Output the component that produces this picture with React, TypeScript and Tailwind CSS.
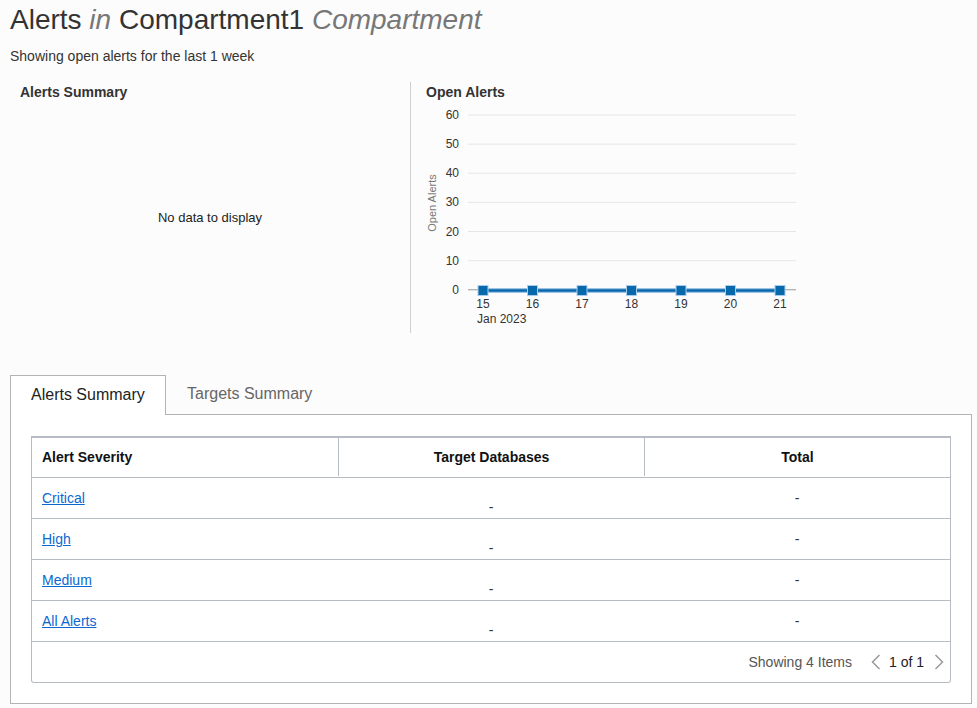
import React from 'react';

// Kartu ringkasan alert untuk satu compartment

const yTicks = [60, 50, 40, 30, 20, 10, 0];
const days = ['15', '16', '17', '18', '19', '20', '21'];
const rows = ['Critical', 'High', 'Medium', 'All Alerts'];

function OpenAlertsChart() {
  const gy = (i: number) => 13 + i * 29.13;
  const px = (i: number) => 57 + i * 49.5;
  const lineY = 188.5;
  return (
    <svg width="380" height="231" viewBox="0 0 380 231" className="block">
      <text
        x="6"
        y="101"
        transform="rotate(-90 6 101)"
        textAnchor="middle"
        dominantBaseline="central"
        fontSize="11"
        fill="#777"
        fontFamily="'Liberation Sans', Arial, sans-serif"
      >
        Open Alerts
      </text>
      {yTicks.map((t, i) => (
        <g key={t}>
          <line
            x1="42"
            x2="370"
            y1={gy(i)}
            y2={gy(i)}
            stroke={t === 0 ? '#9a9a9a' : '#e4e6ea'}
            strokeWidth="1"
          />
          <text
            x="33"
            y={gy(i)}
            textAnchor="end"
            dominantBaseline="central"
            fontSize="12"
            fill="#333"
            fontFamily="'Liberation Sans', Arial, sans-serif"
          >
            {t}
          </text>
        </g>
      ))}
      <line x1={px(0)} x2={px(6)} y1={lineY} y2={lineY} stroke="#9cc4e6" strokeWidth="5" />
      <line x1={px(0)} x2={px(6)} y1={lineY} y2={lineY} stroke="#0a67ab" strokeWidth="2.5" />
      {days.map((d, i) => (
        <g key={d}>
          <rect
            x={px(i) - 5}
            y={lineY - 5}
            width="10"
            height="10"
            fill="#0768ac"
            stroke="#a9cdea"
            strokeWidth="1"
          />
          <text
            x={px(i)}
            y="206"
            textAnchor="middle"
            fontSize="12"
            fill="#333"
            fontFamily="'Liberation Sans', Arial, sans-serif"
          >
            {d}
          </text>
        </g>
      ))}
      <text x="51" y="221" fontSize="12" fill="#333" fontFamily="'Liberation Sans', Arial, sans-serif">
        Jan 2023
      </text>
    </svg>
  );
}

function Chevron({ dir }: { dir: 'left' | 'right' }) {
  return (
    <svg width="10" height="16" viewBox="0 0 10 16" fill="none" stroke="#9a9a9a" strokeWidth="1.5">
      {dir === 'left' ? <polyline points="8.5 1 1.5 8 8.5 15" /> : <polyline points="1.5 1 8.5 8 1.5 15" />}
    </svg>
  );
}

export default function App() {
  return (
    <div
      className="min-h-screen bg-[#fcfcfc] text-[#333]"
      style={{ fontFamily: "'Liberation Sans', Arial, sans-serif" }}
    >
      <div className="pl-[10px] pr-[5px] pt-[3px]">
        {/* Judul */}
        <h1 className="text-[28px] leading-[34px] text-[#333]">
          Alerts <span className="italic text-[#777]">in</span> Compartment1{' '}
          <span className="italic text-[#777]">Compartment</span>
        </h1>
        <div className="mt-[9px] text-[14px] leading-[20px] text-[#333]">Showing open alerts for the last 1 week</div>

        {/* Panel atas */}
        <div className="mt-[16px] flex h-[251px]">
          <div className="flex w-[400px] flex-col">
            <div className="pl-[10px] text-[14px] font-bold leading-[20px] text-[#333]">Alerts Summary</div>
            <div className="flex flex-1 items-center justify-center text-[13px] text-[#222]">No data to display</div>
          </div>
          <div className="border-l border-[#cfcfcf] pl-[15px]">
            <div className="text-[14px] font-bold leading-[20px] text-[#333]">Open Alerts</div>
            <OpenAlertsChart />
          </div>
        </div>

        {/* Tabs */}
        <div className="mt-[42px]">
          <div className="relative z-10 flex">
            <div className="-mb-px flex h-[40px] w-[156px] items-center border border-b-0 border-[#b3b3b3] bg-white pb-[2px] pl-[20px] text-[16px] text-[#222]">
              Alerts Summary
            </div>
            <div className="flex h-[39px] items-center pb-[2px] pl-[21px] text-[16px] text-[#666]">Targets Summary</div>
          </div>
          <div className="border border-[#b3b3b3] bg-white px-[20px] pt-[21px] pb-[20px]">
            <div className="overflow-hidden rounded-b-[3px] border border-t-2 border-[#b7bcc4]">
              <div className="grid h-[40px] grid-cols-3 border-b border-[#b7bcc4] pb-[1px] text-[14px] font-bold text-[#111]">
                <div className="flex items-center pl-[10px]">Alert Severity</div>
                <div className="flex items-center justify-center border-l border-[#b7bcc4]">Target Databases</div>
                <div className="flex items-center justify-center border-l border-[#b7bcc4]">Total</div>
              </div>
              {rows.map((r) => (
                <div key={r} className="grid h-[41px] grid-cols-3 border-b border-[#b7bcc4] text-[14px]">
                  <div className="flex items-center pl-[10px]">
                    <a href="#" className="text-[#0b68d1] underline">
                      {r}
                    </a>
                  </div>
                  <div className="flex items-end justify-center pb-[1px] leading-[20px] text-[#333]">-</div>
                  <div className="flex items-center justify-center text-[#333]">-</div>
                </div>
              ))}
              <div className="flex h-[40px] items-center justify-end pr-[6px] text-[14px] text-[#555]">
                <span>Showing 4 Items</span>
                <span className="ml-[19px]">
                  <Chevron dir="left" />
                </span>
                <span className="ml-[8px] text-[#222]">1 of 1</span>
                <span className="ml-[10px]">
                  <Chevron dir="right" />
                </span>
              </div>
            </div>
          </div>
        </div>
      </div>
    </div>
  );
}
